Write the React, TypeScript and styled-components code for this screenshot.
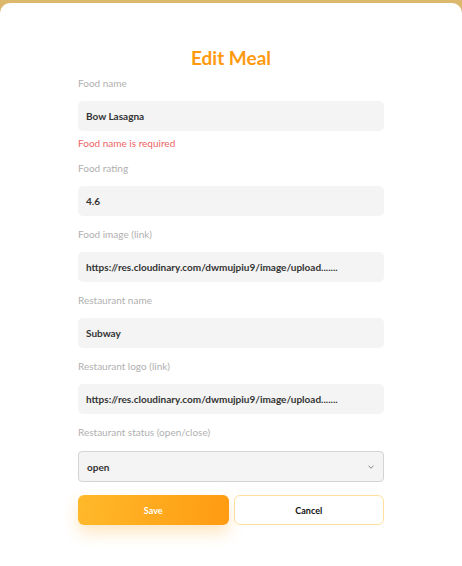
import styled, { createGlobalStyle } from "styled-components";

const GlobalStyle = createGlobalStyle`
  html, body {
    margin: 0;
    padding: 0;
    background: #dcb86c;
  }
  * {
    box-sizing: border-box;
  }
`;

const Card = styled.div`
  margin-top: 3px;
  min-height: 563px;
  background: #ffffff;
  border-radius: 10px 10px 0 0;
  padding: 43px 78px 0 78px;
  font-family: "Lato", "Noto Sans", sans-serif;
`;

const Title = styled.h1`
  margin: 0 0 6px 0;
  text-align: center;
  font-size: 19px;
  line-height: 24px;
  font-weight: 700;
  color: #ff9a0e;
`;

const Field = styled.div`
  display: flex;
  flex-direction: column;
  margin-bottom: 11px;
`;

const Label = styled.label`
  font-size: 10px;
  line-height: 14px;
  color: #b0b0b0;
  margin-bottom: 11px;
`;

const Input = styled.input`
  height: 30px;
  border: none;
  border-radius: 5px;
  background: #f4f4f4;
  padding: 0 8px;
  font-family: inherit;
  font-size: 10px;
  font-weight: 700;
  color: #333333;
  outline: none;
`;

const ErrorText = styled.div`
  margin-top: 5px;
  font-size: 10px;
  line-height: 14px;
  color: #f06464;
`;

const SelectWrap = styled.div`
  height: 31px;
  margin-top: 1px;
  border: 1px solid #d4d4d4;
  border-radius: 4px;
  background: #f4f4f4;
  display: flex;
  align-items: center;
  padding: 0 8px;
`;

const SelectText = styled.span`
  flex: 1;
  font-size: 10px;
  font-weight: 700;
  color: #333333;
`;

const Buttons = styled.div`
  display: grid;
  grid-template-columns: 1fr 1fr;
  gap: 5px;
  margin-top: 13px;
`;

const Button = styled.button<{ primary?: boolean }>`
  height: 30px;
  border-radius: 6px;
  font-family: inherit;
  font-size: 9px;
  font-weight: 700;
  cursor: pointer;
  border: ${({ primary }) => (primary ? "none" : "1px solid #ffdf9e")};
  color: ${({ primary }) => (primary ? "#ffffff" : "#111111")};
  background: ${({ primary }) =>
    primary ? "linear-gradient(100deg, #ffb92a 0%, #ff9b12 100%)" : "#ffffff"};
  box-shadow: ${({ primary }) =>
    primary ? "0 8px 16px rgba(255, 170, 40, 0.28)" : "none"};
`;

const fields = [
  { label: "Food name", value: "Bow Lasagna", error: "Food name is required" },
  { label: "Food rating", value: "4.6" },
  {
    label: "Food image (link)",
    value: "https://res.cloudinary.com/dwmujpiu9/image/upload.......",
  },
  { label: "Restaurant name", value: "Subway" },
  {
    label: "Restaurant logo (link)",
    value: "https://res.cloudinary.com/dwmujpiu9/image/upload.......",
  },
];

const Chevron = () => (
  <svg width="8" height="6" viewBox="0 0 8 6">
    <path d="M1.5 1.8 L4 4.2 L6.5 1.8" fill="none" stroke="#777" strokeWidth="0.9" />
  </svg>
);

const App = () => {
  return (
    <>
      <GlobalStyle />
      <Card>
        <Title>Edit Meal</Title>
        {fields.map((f) => (
          <Field key={f.label}>
            <Label>{f.label}</Label>
            <Input defaultValue={f.value} />
            {f.error && <ErrorText>{f.error}</ErrorText>}
          </Field>
        ))}
        <Field>
          <Label>Restaurant status (open/close)</Label>
          <SelectWrap>
            <SelectText>open</SelectText>
            <Chevron />
          </SelectWrap>
        </Field>
        <Buttons>
          <Button primary>Save</Button>
          <Button>Cancel</Button>
        </Buttons>
      </Card>
    </>
  );
};

export default App;
